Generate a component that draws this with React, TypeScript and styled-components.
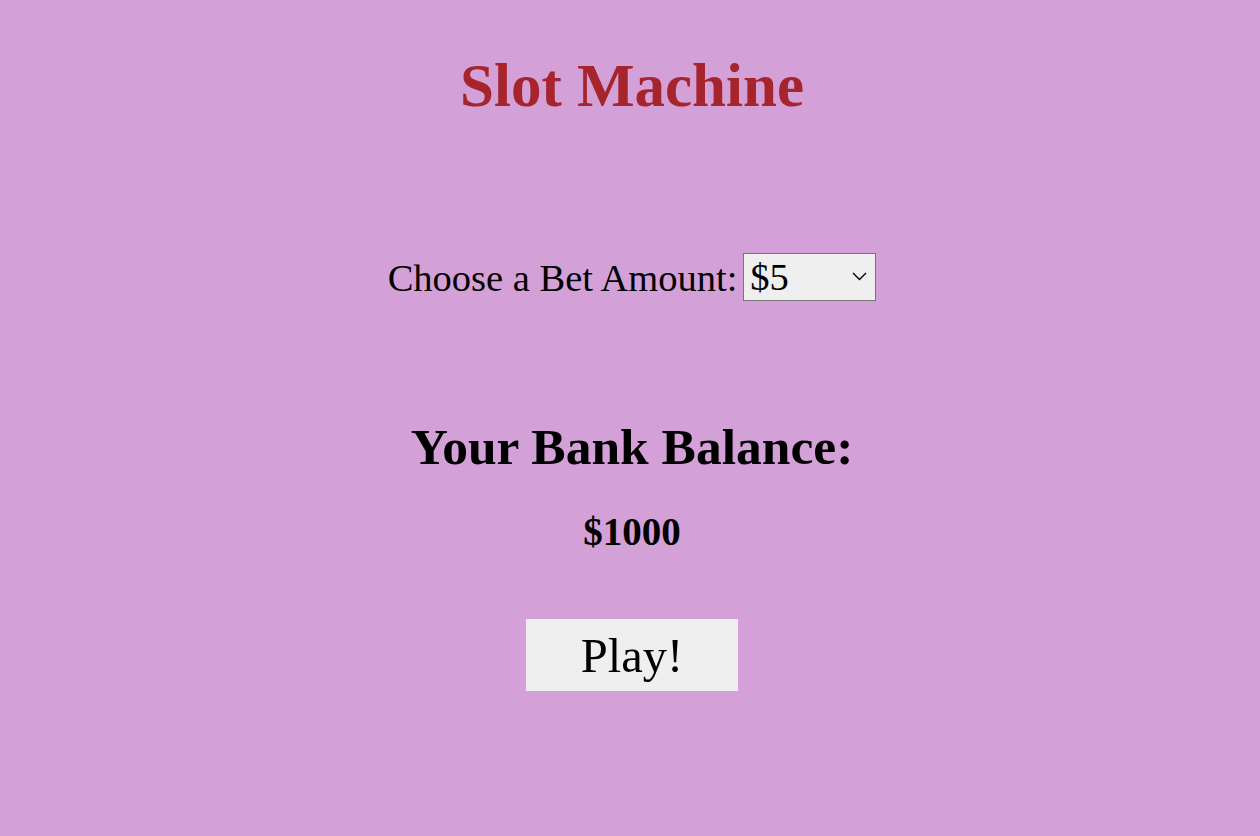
import React from "react";
import styled, { createGlobalStyle } from "styled-components";

const Global = createGlobalStyle`
  html, body { margin: 0; padding: 0; background: #d4a0d8; }
  body { font-family: "Liberation Serif", "Times New Roman", serif; color: #000; }
`;

const Page = styled.main`
  min-height: 836px;
  display: flex;
  flex-direction: column;
  align-items: center;
  padding: 51px 0 0 4px;
  box-sizing: border-box;
`;

const Title = styled.h1`
  margin: 0;
  font-size: 61px;
  line-height: 70px;
  font-weight: bold;
  color: #a6242c;
`;

const BetRow = styled.div`
  margin-top: 132px;
  display: flex;
  align-items: center;
  gap: 6px;
  height: 48px;
`;

const Label = styled.label`
  font-size: 38.5px;
  line-height: 48px;
  padding-top: 2px;
`;

const SelectWrap = styled.div`
  position: relative;
  width: 133px;
  height: 48px;
`;

const Select = styled.select`
  appearance: none;
  -webkit-appearance: none;
  width: 100%;
  height: 100%;
  box-sizing: border-box;
  margin: 0;
  padding: 0 0 0 6px;
  border: 1px solid #767676;
  border-radius: 0;
  background: #efefef;
  font-family: "Liberation Serif", "Times New Roman", serif;
  font-size: 38.5px;
  color: #000;
  outline: none;
`;

const Chevron = styled.svg`
  position: absolute;
  right: 9px;
  top: 19px;
  pointer-events: none;
`;

const Balance = styled.h2`
  margin: 116px 0 0;
  font-size: 51.5px;
  line-height: 60px;
  font-weight: bold;
`;

const Amount = styled.p`
  margin: 32px 0 0;
  font-size: 39px;
  line-height: 45px;
  font-weight: bold;
`;

const PlayButton = styled.button`
  margin-top: 65px;
  width: 212px;
  height: 72px;
  border: none;
  border-radius: 0;
  background: #efefef;
  font-family: "Liberation Serif", "Times New Roman", serif;
  font-size: 48.5px;
  color: #000;
  padding: 0;
  cursor: pointer;
`;

export default function App() {
  return (
    <>
      <Global />
      <Page>
        <Title>Slot Machine</Title>
        <BetRow>
          <Label htmlFor="bet">Choose a Bet Amount:</Label>
          <SelectWrap>
            <Select id="bet" defaultValue="5">
              <option value="5">$5</option>
              <option value="10">$10</option>
              <option value="25">$25</option>
              <option value="50">$50</option>
            </Select>
            <Chevron width="15" height="9" viewBox="0 0 15 9">
              <path d="M1 1 L7.5 7.5 L14 1" fill="none" stroke="#000" strokeWidth="1.4" />
            </Chevron>
          </SelectWrap>
        </BetRow>
        <Balance>Your Bank Balance:</Balance>
        <Amount>$1000</Amount>
        <PlayButton>Play!</PlayButton>
      </Page>
    </>
  );
}
